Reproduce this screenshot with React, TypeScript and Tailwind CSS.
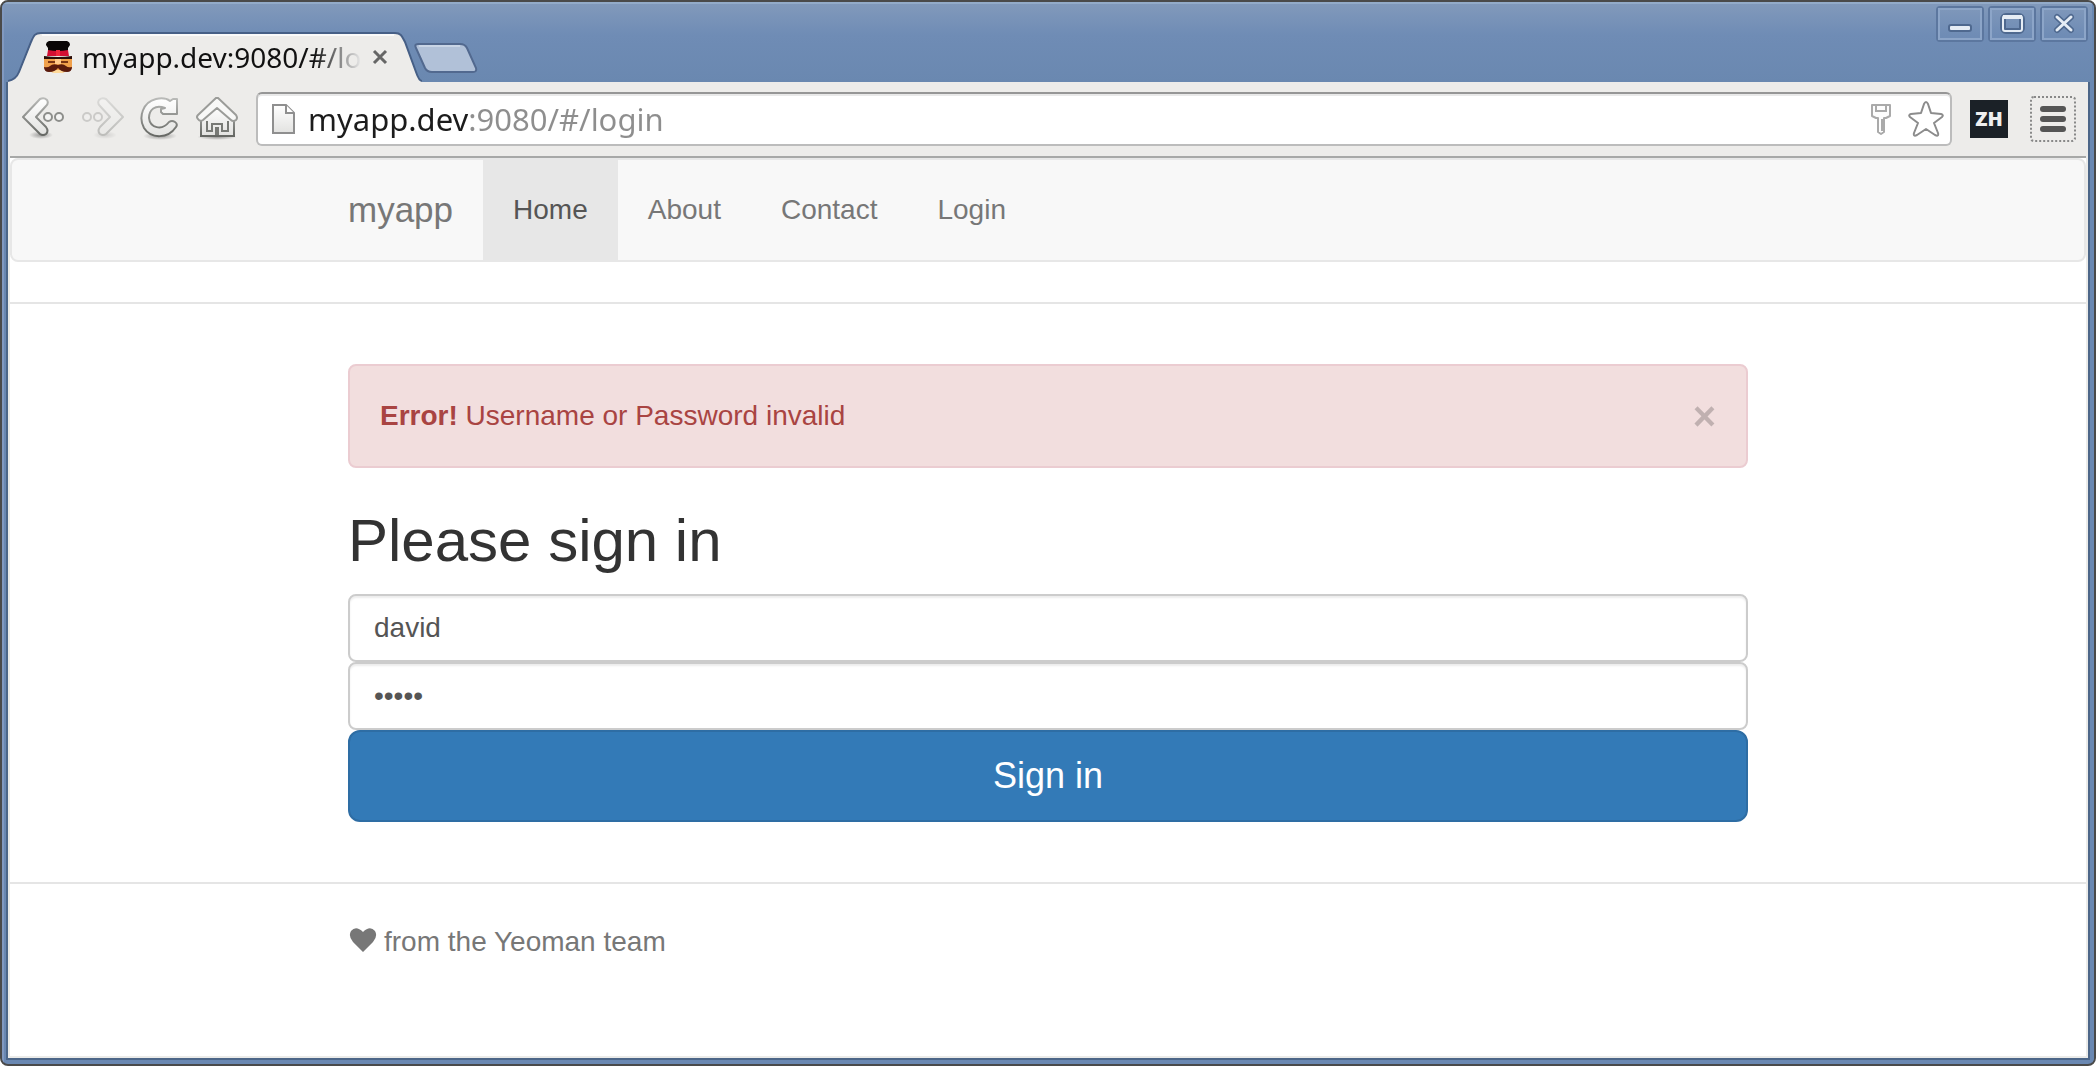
import React from "react";

function YeomanIcon() {
  return (
    <svg className="h-8 w-7 shrink-0" viewBox="0 0 28 32" aria-hidden="true">
      <path d="M2 4Q2 1 5 0H23Q26 1 26 4L24 7V12H4V7Z" fill="#0a0606" />
      <path d="M4 9Q14 11 24 9L25 15H3Z" fill="#d40f33" />
      <rect x="12" y="9" width="4" height="6" fill="#f0263c" />
      <path d="M0 15Q14 17 28 15V18H0Z" fill="#2a0d08" />
      <path d="M0 18H28V27Q22 32 14 32T0 27Z" fill="#f0a04b" />
      <path d="M4 20H11V22H4ZM17 20H24V22H17Z" fill="#7a3413" />
      <path d="M11 18H17V23H11Z" fill="#ffc98a" />
      <path d="M8 29H20L19 32H9Z" fill="#ffd99a" />
      <path d="M14 24Q9 22 6 25Q4 27 0 26Q0 31 5 31Q11 31 14 27Q17 31 23 31Q28 31 28 26Q24 27 22 25Q19 22 14 24Z" fill="#5a1a0c" />
    </svg>
  );
}

function BrowserTab() {
  return (
    <div className="relative flex h-[50px] w-[414px] items-center pl-9">
      <svg className="absolute inset-0 h-full w-full" viewBox="0 0 414 50" aria-hidden="true">
        <path
          d="M0 50V49C6 48 9 45 11 40L23 10C26 3 27 1 33 1H387C393 1 394 4 397 10L408 40C410 46 412 49 414 49V50Z"
          fill="#edecea"
        />
        <path
          d="M0 49C6 48 9 45 11 40L23 10C26 3 27 1 33 1H387C393 1 394 4 397 10L408 40C410 46 412 49 414 49"
          fill="none"
          stroke="#465f86"
          strokeWidth="2"
        />
        <path d="M34 3H386" stroke="#fafafa" strokeWidth="2" />
      </svg>
      <div className="relative flex items-center">
        <YeomanIcon />
        <span className="ml-[10px] w-[282px] bg-[linear-gradient(to_right,#111_232px,#ededed_280px)] bg-clip-text font-['Noto_Sans',sans-serif] text-[28px] leading-10 whitespace-nowrap text-transparent">
          myapp.dev:9080/#/lo
        </span>
        <button type="button" aria-label="Close tab" className="ml-1 flex h-6 w-6 items-center justify-center">
          <svg className="h-4 w-4" viewBox="0 0 16 16" aria-hidden="true">
            <path d="M2 2L14 14M14 2L2 14" stroke="#666" strokeWidth="3" />
          </svg>
        </button>
      </div>
    </div>
  );
}

function WindowButton({ label, children }: { label: string; children: React.ReactNode }) {
  return (
    <button type="button" aria-label={label} className="h-9 w-12 rounded-sm border-2 border-[#5c779f]">
      <span className="flex h-full w-full items-center justify-center border-2 border-[#8ca5c8]">
        <svg className="h-6 w-7" viewBox="0 0 28 24" aria-hidden="true">
          {children}
        </svg>
      </span>
    </button>
  );
}

function TitleBar() {
  return (
    <div className="flex h-[78px] justify-between bg-linear-to-b from-[#8199bb] via-[#6f8cb5] via-40% to-[#6a88b0] px-1">
      <div className="flex items-end">
        <BrowserTab />
        <button type="button" aria-label="New tab" className="-ml-2 mb-2 h-8 w-16">
          <svg className="h-full w-full" viewBox="0 0 64 32" aria-hidden="true">
            <path
              d="M4 2H46Q51 2 53 6L62 26Q63 30 59 30H18Q13 30 11 26L2 6Q0 2 4 2Z"
              fill="#b1c1d8"
              stroke="#52698f"
              strokeWidth="2"
            />
            <path d="M5 4H46" stroke="#c9d5e6" strokeWidth="2" />
          </svg>
        </button>
      </div>
      <div className="flex gap-1 pt-0.5">
        <WindowButton label="Minimize">
          <rect x="2" y="12" width="24" height="8" rx="3" fill="#4f698f" />
          <rect x="4" y="14" width="20" height="4" rx="1" fill="#e6edf5" />
        </WindowButton>
        <WindowButton label="Maximize">
          <rect x="5" y="4" width="19" height="15" rx="3" fill="none" stroke="#4f698f" strokeWidth="6" />
          <rect x="5" y="4" width="19" height="15" rx="2" fill="none" stroke="#e6edf5" strokeWidth="2" />
          <path d="M5 5H24" stroke="#e6edf5" strokeWidth="4" />
        </WindowButton>
        <WindowButton label="Close">
          <path d="M7 5L21 18M21 5L7 18" stroke="#4f698f" strokeWidth="6" strokeLinecap="round" />
          <path d="M7 5L21 18M21 5L7 18" stroke="#e6edf5" strokeWidth="3" strokeLinecap="round" />
        </WindowButton>
      </div>
    </div>
  );
}

function ToolDefs() {
  return (
    <svg className="absolute h-0 w-0" aria-hidden="true">
      <defs>
        <linearGradient id="edge" x1="0" y1="0" x2="0" y2="1">
          <stop offset="0" stopColor="#b9bab8" />
          <stop offset="1" stopColor="#656763" />
        </linearGradient>
        <linearGradient id="body" x1="0" y1="0" x2="0" y2="1">
          <stop offset="0" stopColor="#ffffff" />
          <stop offset="1" stopColor="#e2e2e0" />
        </linearGradient>
        <radialGradient id="shade">
          <stop offset="0" stopColor="#000" stopOpacity="0.35" />
          <stop offset="1" stopColor="#000" stopOpacity="0" />
        </radialGradient>
      </defs>
    </svg>
  );
}

function ArrowDrawing() {
  return (
    <>
      <ellipse cx="19" cy="38" rx="12" ry="4" fill="url(#shade)" />
      <path
        d="M1 20L18 2Q22 0 25 3Q27 6 24 9L14 20L24 30Q27 34 24 37Q21 39 18 37Z"
        fill="url(#body)"
        stroke="url(#edge)"
        strokeWidth="2"
        strokeLinejoin="round"
      />
      <circle cx="26" cy="20" r="4" fill="#f4f4f3" stroke="#8d8e8b" strokeWidth="2" />
      <circle cx="37" cy="20" r="4" fill="#f4f4f3" stroke="#8d8e8b" strokeWidth="2" />
    </>
  );
}

function Toolbar() {
  return (
    <div className="flex h-[74px] items-center bg-[#edecea] pr-3 pl-[14px]">
      <ToolDefs />
      <div className="flex shrink-0 items-center">
        <button type="button" aria-label="Back" className="h-11 w-11">
          <svg className="h-11 w-11" viewBox="0 0 44 44" aria-hidden="true">
            <ArrowDrawing />
          </svg>
        </button>
        <button type="button" aria-label="Forward" disabled className="ml-4 h-11 w-11 opacity-35">
          <svg className="h-11 w-11" viewBox="0 0 44 44" aria-hidden="true">
            <g transform="matrix(-1 0 0 1 42 0)">
              <ArrowDrawing />
            </g>
          </svg>
        </button>
        <button type="button" aria-label="Reload" className="ml-[14px] h-11 w-10">
          <svg className="h-11 w-10" viewBox="0 0 40 44" aria-hidden="true">
            <ellipse cx="20" cy="39" rx="17" ry="4" fill="url(#shade)" />
            <path
              d="M37 2V17H23L21 15V12L25 11C15 7 9 13 9 21C10 31 22 34 29 25Q32 23 35 25Q38 27 36 30C28 42 11 42 4 31C-2 20 3 5 16 2Q25 0 30 4L33 2Z"
              fill="url(#body)"
              stroke="url(#edge)"
              strokeWidth="2"
              strokeLinejoin="round"
            />
          </svg>
        </button>
        <button type="button" aria-label="Home" className="ml-4 h-11 w-11">
          <svg className="h-11 w-11" viewBox="0 0 44 44" aria-hidden="true">
            <ellipse cx="21" cy="40" rx="20" ry="3" fill="url(#shade)" />
            <path d="M5 22L21 8L38 22V39H5Z" fill="url(#body)" stroke="url(#edge)" strokeWidth="2" />
            <path d="M11 24V34H16V27H26V34H32V24" fill="none" stroke="#777975" strokeWidth="2" />
            <path d="M21 30V38" stroke="#777975" strokeWidth="4" />
            <path
              d="M21 0L40 18Q42 21 40 23Q37 25 35 23L21 11L7 23Q4 25 2 22Q0 20 2 18Z"
              fill="#f8f8f7"
              stroke="#9b9c99"
              strokeWidth="2"
              strokeLinejoin="round"
            />
          </svg>
        </button>
      </div>
      <div className="ml-4 flex h-[54px] min-w-0 flex-1 items-center rounded-md border-2 border-[#bcbcbc] border-t-[#969696] bg-white pr-1.5 pl-[14px] shadow-[inset_0_2px_0_#e9e9e9]">
        <svg className="h-8 w-6 shrink-0" viewBox="0 0 24 32" aria-hidden="true">
          <path d="M1 2H14L22 10V30H1Z" fill="url(#body)" stroke="#8f8f8f" strokeWidth="2" />
          <path d="M14 2V10H22" fill="#fff" stroke="#8f8f8f" strokeWidth="2" />
        </svg>
        <input
          type="text"
          aria-label="Address"
          defaultValue="myapp.dev:9080/#/login"
          className="ml-3 h-11 min-w-0 flex-1 bg-[linear-gradient(to_right,#1c1c1c_160px,#8e8e8e_160px)] bg-clip-text font-['Noto_Sans',sans-serif] text-[31px] text-transparent outline-none"
        />
        <button type="button" aria-label="Saved passwords" className="h-8 w-[22px]">
          <svg className="h-8 w-[22px]" viewBox="0 0 22 32" aria-hidden="true">
            <path
              d="M2 2H20V13L16 15H14V29L11 31L8 29V15H6L2 13Z"
              fill="#fdfdfd"
              stroke="#aaa"
              strokeWidth="2"
              strokeLinejoin="round"
            />
            <path d="M6 3V8H16V3M12 16V28" fill="none" stroke="#aaa" strokeWidth="2" />
          </svg>
        </button>
        <button type="button" aria-label="Bookmark this page" className="ml-4 h-9 w-9">
          <svg className="h-9 w-9" viewBox="0 0 36 36" aria-hidden="true">
            <path
              d="M18 1Q19 1 20 3L23 12L33 13Q36 14 34 16L26 22L30 32Q31 36 27 34L18 28L9 34Q5 36 6 32L10 22L2 16Q0 14 3 13L13 12L16 3Q17 1 18 1Z"
              fill="#fff"
              stroke="#8c8c8c"
              strokeWidth="2"
              strokeLinejoin="round"
            />
          </svg>
        </button>
      </div>
      <button
        type="button"
        className="ml-[18px] flex h-[38px] w-[38px] items-center justify-center bg-[#1b2127] font-['Open_Sans',sans-serif] text-xl font-extrabold text-[#eee]"
      >
        ZH
      </button>
      <button
        type="button"
        aria-label="Menu"
        className="ml-[22px] flex h-[46px] w-[46px] flex-col items-center justify-center gap-1 rounded-sm border-2 border-dotted border-[#888]"
      >
        <span className="h-[6px] w-[26px] rounded-[3px] bg-[#555]" />
        <span className="h-[6px] w-[26px] rounded-[3px] bg-[#555]" />
        <span className="h-[6px] w-[26px] rounded-[3px] bg-[#555]" />
      </button>
    </div>
  );
}

const links = ["About", "Contact", "Login"];

function NavBar() {
  return (
    <nav className="rounded-lg border-2 border-[#e7e7e7] bg-[#f8f8f8] text-[28px] text-[#777]">
      <div className="mx-auto flex h-[100px] max-w-[1400px] items-stretch">
        <a href="#/" className="flex items-center pr-[30px] text-[35px]">
          myapp
        </a>
        <a href="#/" aria-current="page" className="flex items-center bg-[#e7e7e7] px-[30px] text-[#555]">
          Home
        </a>
        {links.map((name) => (
          <a key={name} href={"#/" + name.toLowerCase()} className="flex items-center px-[30px]">
            {name}
          </a>
        ))}
      </div>
    </nav>
  );
}

const fieldClass =
  "block h-[68px] w-full rounded-lg border-2 border-[#ccc] bg-white px-6 text-[28px] text-[#555] shadow-[inset_0_2px_2px_rgba(0,0,0,0.075)] outline-none";

export default function App() {
  return (
    <div className="min-h-screen bg-white">
      <div className="flex min-h-screen flex-col overflow-hidden rounded-lg border-2 border-[#4a4a4a] bg-[#6a88b2]">
        <div className="flex flex-1 flex-col border-2 border-b-0 border-t-[#93abc9] border-r-[#6a88b2] border-l-[#8199c0]">
          <TitleBar />
          <div className="mx-0.5 mb-1 flex flex-1 flex-col border-2 border-t-0 border-[#4c6688]">
            <Toolbar />
            <div className="flex-1 border-2 border-t-0 border-[#ebebe9] bg-white font-['Liberation_Sans',Arial,sans-serif] text-[#333]">
              <div className="h-0.5 bg-[#a7a8a7]" />
              <NavBar />
              <hr className="mt-10 border-t-2 border-[#e5e5e5]" />
              <main className="mx-auto max-w-[1400px] pt-[60px]">
                <div
                  role="alert"
                  className="flex h-[104px] items-center justify-between rounded-lg border-2 border-[#ebccd1] bg-[#f2dede] px-[30px] text-[28px] text-[#a94442]"
                >
                  <p>
                    <strong>Error!</strong> Username or Password invalid
                  </p>
                  <button
                    type="button"
                    aria-label="Dismiss"
                    className="text-[40px] leading-none font-bold text-black opacity-20"
                  >
                    ×
                  </button>
                </div>
                <form onSubmit={(e) => e.preventDefault()}>
                  <h2 className="mt-10 mb-5 text-6xl leading-[66px]">Please sign in</h2>
                  <input type="text" aria-label="Username" defaultValue="david" className={fieldClass} />
                  <input type="password" aria-label="Password" defaultValue="admin" className={fieldClass} />
                  <button
                    type="submit"
                    className="block h-[92px] w-full rounded-xl border-2 border-[#2e6da4] bg-[#337ab7] text-4xl text-white"
                  >
                    Sign in
                  </button>
                </form>
              </main>
              <footer className="mt-[60px] border-t-2 border-[#e5e5e5] pt-[38px] text-[28px] text-[#777]">
                <p className="mx-auto flex max-w-[1400px] items-center gap-[6px] leading-10">
                  <svg className="mb-1 h-6 w-[30px]" viewBox="0 0 30 24" aria-hidden="true">
                    <path
                      d="M15 24L5 14Q0 8 3 3Q8 -3 15 4Q22 -3 27 3Q30 8 25 14Z"
                      fill="#777"
                    />
                  </svg>
                  from the Yeoman team
                </p>
              </footer>
            </div>
          </div>
        </div>
      </div>
    </div>
  );
}
